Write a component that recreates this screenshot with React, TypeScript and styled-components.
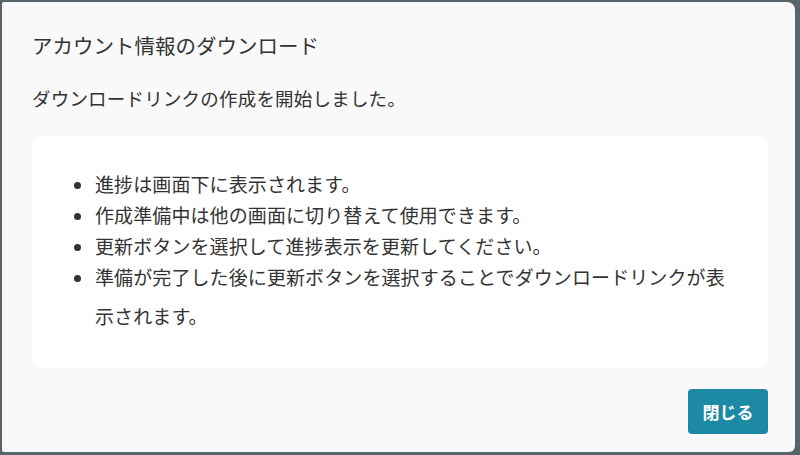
import React from "react";
import styled, { createGlobalStyle } from "styled-components";

const GlobalStyle = createGlobalStyle`
  html, body {
    margin: 0;
    padding: 0;
    height: 100%;
  }
  body {
    background: #58656b;
    font-family: "Noto Sans CJK JP", "Noto Sans", sans-serif;
  }
`;

const notes = [
  "進捗は画面下に表示されます。",
  "作成準備中は他の画面に切り替えて使用できます。",
  "更新ボタンを選択して進捗表示を更新してください。",
  "準備が完了した後に更新ボタンを選択することでダウンロードリンクが表示されます。",
];

function App() {
  return (
    <Backdrop>
      <GlobalStyle />
      <Dialog role="dialog" aria-labelledby="dl-title">
        <Title id="dl-title">アカウント情報のダウンロード</Title>
        <Message>ダウンロードリンクの作成を開始しました。</Message>
        <NoteBox>
          <NoteList>
            {notes.map((n) => (
              <li key={n}>{n}</li>
            ))}
          </NoteList>
        </NoteBox>
        <Footer>
          <CloseButton type="button">閉じる</CloseButton>
        </Footer>
      </Dialog>
    </Backdrop>
  );
}

const Backdrop = styled.div`
  width: 800px;
  height: 455px;
  padding: 2px 5px 3px 2px;
  box-sizing: border-box;
  display: flex;
`;

const Dialog = styled.div`
  flex: 1;
  display: flex;
  flex-direction: column;
  background: #f9f9f9;
  border-radius: 2px 8px 6px 2px;
  padding: 0 27px 0 30px;
  color: #333333;
`;

const Title = styled.h2`
  margin: 28px 0 0;
  font-size: 20.5px;
  font-weight: 400;
  line-height: 30px;
`;

const Message = styled.p`
  margin: 25px 0 0;
  font-size: 18.5px;
  line-height: 26px;
  letter-spacing: 0.2px;
`;

const NoteBox = styled.div`
  margin-top: 25px;
  background: #ffffff;
  border-radius: 8px;
  height: 232px;
  box-sizing: border-box;
  padding: 28px 28px 0 0;
`;

const NoteList = styled.ul`
  margin: 0;
  padding-left: 63px;
  font-size: 19px;
  line-height: 39px;
  letter-spacing: 0.1px;

  & > li + li {
    margin-top: -8px;
  }
`;

const Footer = styled.div`
  display: flex;
  justify-content: flex-end;
  margin-top: 21px;
`;

const CloseButton = styled.button`
  width: 80px;
  height: 45px;
  border: none;
  border-radius: 4px;
  background: #1d8aa5;
  color: #ffffff;
  font-family: "Noto Sans CJK JP", sans-serif;
  font-size: 17px;
  font-weight: 700;
  cursor: pointer;
`;

export default App;
